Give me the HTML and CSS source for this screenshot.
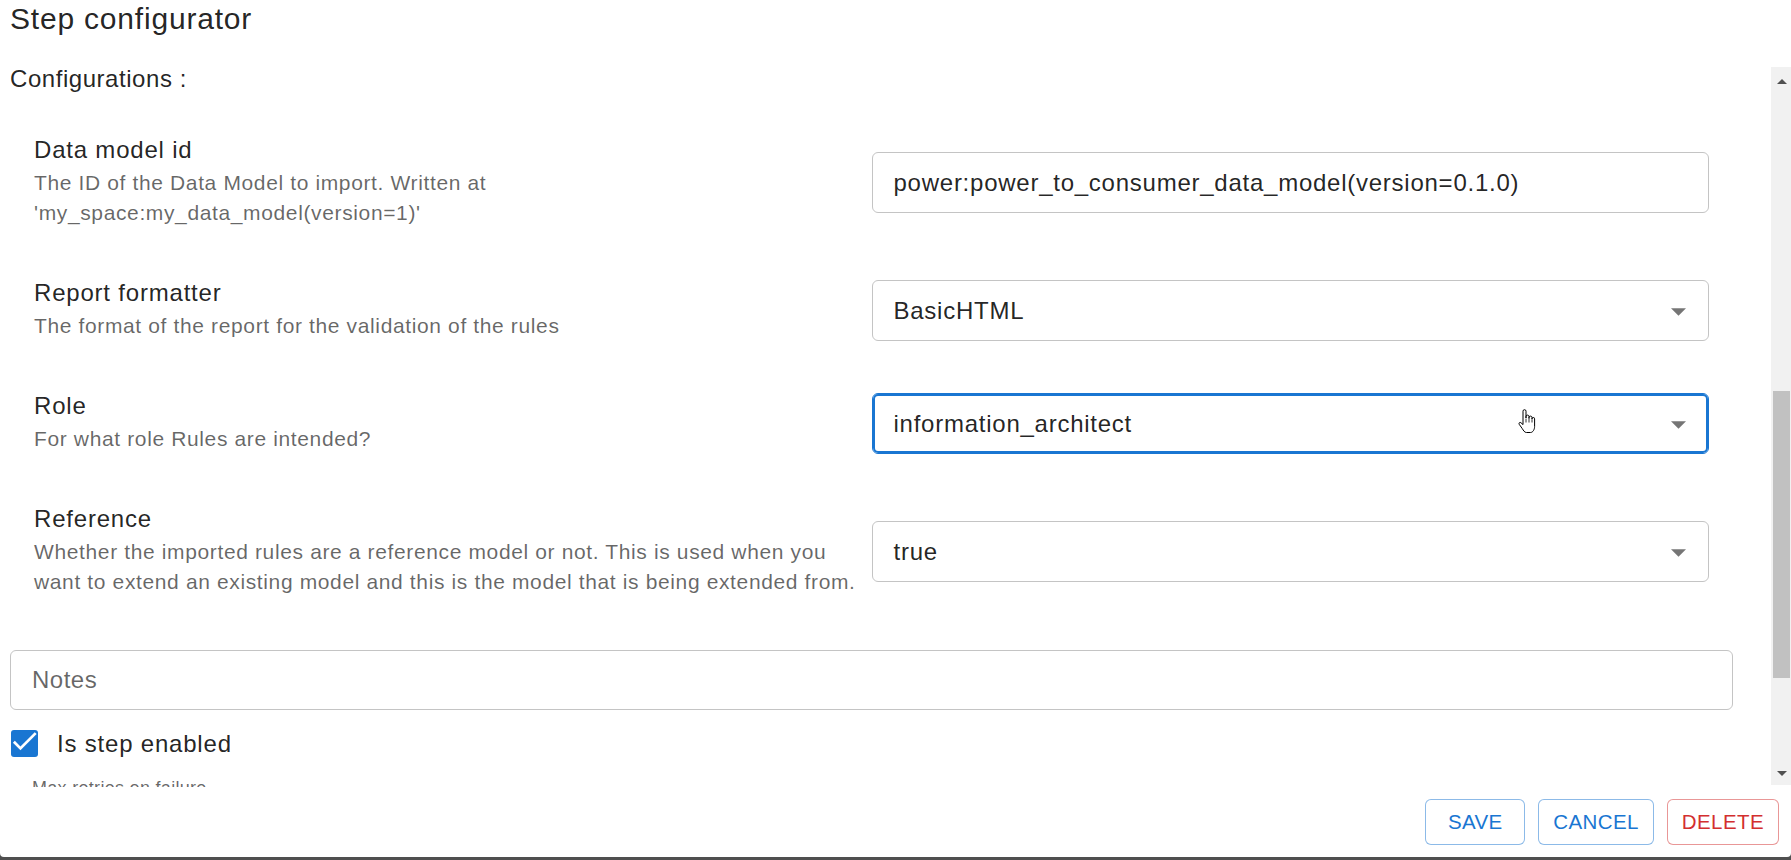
FILE: index.html
```html
<!DOCTYPE html>
<html>
<head>
<meta charset="utf-8">
<title>Step configurator</title>
<link rel="stylesheet" href="styles.css">
</head>
<body>
<div class="dialog">
  <h2 class="title">Step configurator</h2>
  <div class="main">
    <div class="content">
      <div class="section-label">Configurations :</div>
      <div class="fields">
        <div class="field">
          <div class="info">
            <div class="label">Data model id</div>
            <div class="desc">The ID of the Data Model to import. Written at 'my_space:my_data_model(version=1)'</div>
          </div>
          <div class="control">
            <div class="input"><span>power:power_to_consumer_data_model(version=0.1.0)</span></div>
          </div>
        </div>
        <div class="field">
          <div class="info">
            <div class="label">Report formatter</div>
            <div class="desc">The format of the report for the validation of the rules</div>
          </div>
          <div class="control">
            <div class="input"><span>BasicHTML</span><svg class="arrow" viewBox="0 0 10 5" width="15" height="8"><path d="M0 0l5 5 5-5z"/></svg></div>
          </div>
        </div>
        <div class="field">
          <div class="info">
            <div class="label">Role</div>
            <div class="desc">For what role Rules are intended?</div>
          </div>
          <div class="control">
            <div class="input focused"><span>information_architect</span><svg class="arrow" viewBox="0 0 10 5" width="15" height="8"><path d="M0 0l5 5 5-5z"/></svg>
              <svg class="cursor" viewBox="0 0 18 25" width="18" height="25"><path d="M5 13V2.2a1.5 1.5 0 0 1 3 0V9V7.6a1.5 1.5 0 0 1 3 0V9.6V8.6a1.5 1.5 0 0 1 3 0V10.2V9.8a1.3 1.3 0 0 1 2.6 0V17.5c0 3-1.8 6-4 6H8.5c-2 0-3-2-4.3-4L1.2 15.3c-0.7-1.1 0.5-2.4 1.6-1.7L5 15.6Z" fill="#fff" stroke="#000" stroke-width="1" stroke-linejoin="round"/><path d="M8 9.5v4M11 10v3.5M14 10.5v3" stroke="#000" stroke-width="0.8" fill="none"/></svg>
            </div>
          </div>
        </div>
        <div class="field">
          <div class="info">
            <div class="label">Reference</div>
            <div class="desc">Whether the imported rules are a reference model or not. This is used when you want to extend an existing model and this is the model that is being extended from.</div>
          </div>
          <div class="control">
            <div class="input"><span>true</span><svg class="arrow" viewBox="0 0 10 5" width="15" height="8"><path d="M0 0l5 5 5-5z"/></svg></div>
          </div>
        </div>
      </div>
      <div class="notes">Notes</div>
      <div class="check-row">
        <svg class="checkbox" viewBox="3 3 18 18" width="27" height="27"><rect x="3" y="3" width="18" height="18" rx="2" fill="#1976d2"/><path d="M9 16.17 4.83 12l-1.42 1.41L9 19 21 7l-1.41-1.41z" fill="#fff" transform="translate(1.2 -0.6) scale(0.9)"/></svg>
        <span class="check-label">Is step enabled</span>
      </div>
      <div class="clipped-label">Max retries on failure</div>
    </div>
    <div class="scrollbar">
      <div class="sb-btn sb-up"><span class="tri-up"></span></div>
      <div class="sb-space"></div>
      <div class="sb-thumb"></div>
      <div class="sb-fill"></div>
      <div class="sb-btn sb-down"><span class="tri-down"></span></div>
    </div>
  </div>
  <div class="footer">
    <button class="btn primary">SAVE</button>
    <button class="btn primary">CANCEL</button>
    <button class="btn danger">DELETE</button>
  </div>
</div>
</body>
</html>
```

FILE: styles.css
```css
html, body {
  margin: 0;
  padding: 0;
}
body {
  background: #4f4f4f;
  font-family: "Liberation Sans", Arial, sans-serif;
  color: rgba(0, 0, 0, 0.87);
  width: 1791px;
  height: 860px;
  overflow: hidden;
}
.dialog {
  height: 857px;
  background: #ffffff;
  display: flex;
  flex-direction: column;
  border-radius: 0 0 4px 4px;
  overflow: hidden;
}
.title {
  margin: 0;
  flex: none;
  height: 59px;
  padding: 0 10px;
  font-size: 30px;
  line-height: 38px;
  font-weight: 400;
  letter-spacing: 0.8px;
}
.main {
  flex: none;
  height: 728px;
  display: flex;
}
.content {
  flex: 1;
  min-width: 0;
  overflow: hidden;
  padding: 0 38px 0 10px;
}
.section-label {
  padding-top: 2px;
  font-size: 24px;
  line-height: 36px;
  letter-spacing: 0.55px;
}
.fields {
  margin-top: 35px;
  display: flex;
  flex-direction: column;
  gap: 47px;
}
.field {
  display: grid;
  grid-template-columns: 1fr 1fr;
  align-items: center;
  padding: 0 24px;
}
.info {
  padding-right: 5px;
}
.label {
  font-size: 24px;
  line-height: 36px;
  letter-spacing: 0.8px;
}
.desc {
  font-size: 21px;
  line-height: 30px;
  letter-spacing: 0.63px;
  color: rgba(0, 0, 0, 0.6);
}
.control {
  padding-top: 5px;
}
.input {
  position: relative;
  box-sizing: border-box;
  height: 61px;
  border: 1px solid #c4c4c4;
  border-radius: 6px;
  display: flex;
  align-items: center;
  justify-content: space-between;
  padding: 0 22px 0 21px;
  font-size: 24px;
  letter-spacing: 0.75px;
  color: rgba(0, 0, 0, 0.87);
}
.input.focused {
  border-color: #1976d2;
  box-shadow: inset 0 0 0 2px #1976d2;
}
.arrow {
  fill: rgba(0, 0, 0, 0.54);
  margin-top: 2px;
}
.cursor {
  position: absolute;
  left: 645px;
  top: 15px;
}
.notes {
  margin-top: 53px;
  box-sizing: border-box;
  height: 60px;
  border: 1px solid #c4c4c4;
  border-radius: 6px;
  display: flex;
  align-items: center;
  padding: 0 21px;
  font-size: 24px;
  letter-spacing: 0.5px;
  color: rgba(0, 0, 0, 0.6);
}
.check-row {
  margin-top: 2px;
  height: 63px;
  display: flex;
  align-items: center;
  gap: 19px;
  padding-left: 1px;
}
.checkbox {
  display: block;
  flex: none;
}
.check-label {
  font-size: 24px;
  letter-spacing: 0.8px;
}
.clipped-label {
  margin-top: 3px;
  padding-left: 22px;
  font-size: 18px;
  line-height: 21.6px;
  letter-spacing: 0.3px;
  color: rgba(0, 0, 0, 0.6);
}
.scrollbar {
  flex: none;
  width: 20px;
  margin-top: 8px;
  height: 718px;
  background: #f1f1f1;
  display: flex;
  flex-direction: column;
}
.sb-btn {
  flex: none;
  display: flex;
  align-items: center;
  justify-content: center;
}
.sb-up {
  height: 28px;
}
.sb-down {
  height: 24px;
}
.tri-up, .tri-down {
  width: 0;
  height: 0;
  border-left: 5px solid transparent;
  border-right: 5px solid transparent;
  margin-left: 1px;
}
.tri-up {
  border-bottom: 5px solid #505050;
}
.tri-down {
  border-top: 5px solid #505050;
}
.sb-space {
  flex: none;
  height: 296px;
}
.sb-thumb {
  flex: none;
  height: 287px;
  margin: 0 1px 0 2px;
  background: #c1c1c1;
}
.sb-fill {
  flex: 1;
}
.footer {
  flex: none;
  height: 70px;
  box-sizing: border-box;
  display: flex;
  justify-content: flex-end;
  align-items: flex-start;
  gap: 13px;
  padding: 12px 12px 0 0;
}
.btn {
  height: 46px;
  min-width: 100px;
  box-sizing: border-box;
  padding: 0 14px;
  background: #ffffff;
  border-radius: 6px;
  font-family: "Liberation Sans", Arial, sans-serif;
  font-size: 20.5px;
  letter-spacing: 0.4px;
  cursor: pointer;
}
.primary {
  color: #1976d2;
  border: 1px solid rgba(25, 118, 210, 0.5);
}
.danger {
  color: #d32f2f;
  border: 1px solid rgba(211, 47, 47, 0.5);
}
```
